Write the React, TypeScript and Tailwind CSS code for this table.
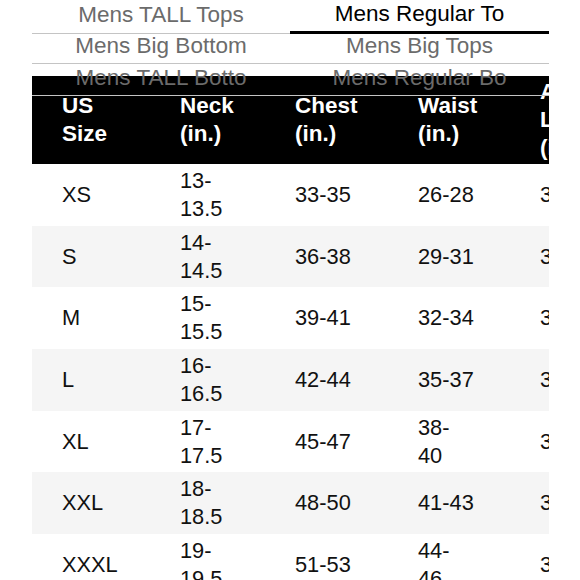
const tabs: [string, string, boolean][] = [
  ["Mens TALL Tops", "Mens Regular To", true],
  ["Mens Big Bottom", "Mens Big Tops", false],
  ["Mens TALL Botto", "Mens Regular Bo", false],
];

const header = [
  ["US", "Size"],
  ["Neck", "(in.)"],
  ["Chest", "(in.)"],
  ["Waist", "(in.)"],
  ["Arm", "Length", "(in.)"],
];

const rows: string[][][] = [
  [["XS"], ["13-", "13.5"], ["33-35"], ["26-28"], ["32-33"]],
  [["S"], ["14-", "14.5"], ["36-38"], ["29-31"], ["33-34"]],
  [["M"], ["15-", "15.5"], ["39-41"], ["32-34"], ["34-35"]],
  [["L"], ["16-", "16.5"], ["42-44"], ["35-37"], ["35-36"]],
  [["XL"], ["17-", "17.5"], ["45-47"], ["38-", "40"], ["36-37"]],
  [["XXL"], ["18-", "18.5"], ["48-50"], ["41-43"], ["37-38"]],
  [["XXXL"], ["19-", "19.5"], ["51-53"], ["44-", "46"], ["38-39"]],
];

const cols = "grid grid-cols-[118px_115px_123px_122px_120px]";

function Cell({ lines }: { lines: string[] }) {
  return (
    <div className="flex flex-col justify-center whitespace-nowrap">
      {lines.map((l, i) => (
        <span key={i}>{l}</span>
      ))}
    </div>
  );
}

export default function App() {
  return (
    <div className="w-[580px] h-[580px] overflow-hidden bg-white font-['Liberation_Sans',Arial,sans-serif]">
      <div className="ml-[32px] w-[517px] h-[580px] overflow-hidden">
        <div className="relative z-10 -mt-[3px]">
          {tabs.map(([a, b, active], i) => (
            <div key={i} className="grid grid-cols-[258px_259px] h-[32px] text-[22.5px] text-[#6b6b6b]">
              <div className="flex items-center justify-center border-b border-[#c4c4c4]">{a}</div>
              <div
                className={
                  active
                    ? "flex items-center justify-center border-b-[3px] border-black text-black"
                    : "flex items-center justify-center border-b border-[#c4c4c4]"
                }
              >
                {b}
              </div>
            </div>
          ))}
        </div>
        <div className="-mt-[17px] text-[21.8px] leading-[28px]">
          <div className={`${cols} bg-black text-white font-bold text-[22.5px] pl-[30px] py-[2px]`}>
            {header.map((h, i) => (
              <Cell key={i} lines={h} />
            ))}
          </div>
          {rows.map((r, i) => (
            <div
              key={i}
              className={`${cols} pl-[30px] py-[2.85px] text-[#111] ${i % 2 === 1 ? "bg-[#f5f5f5]" : "bg-white"}`}
            >
              {r.map((c, j) => (
                <Cell key={j} lines={c} />
              ))}
            </div>
          ))}
        </div>
      </div>
    </div>
  );
}
